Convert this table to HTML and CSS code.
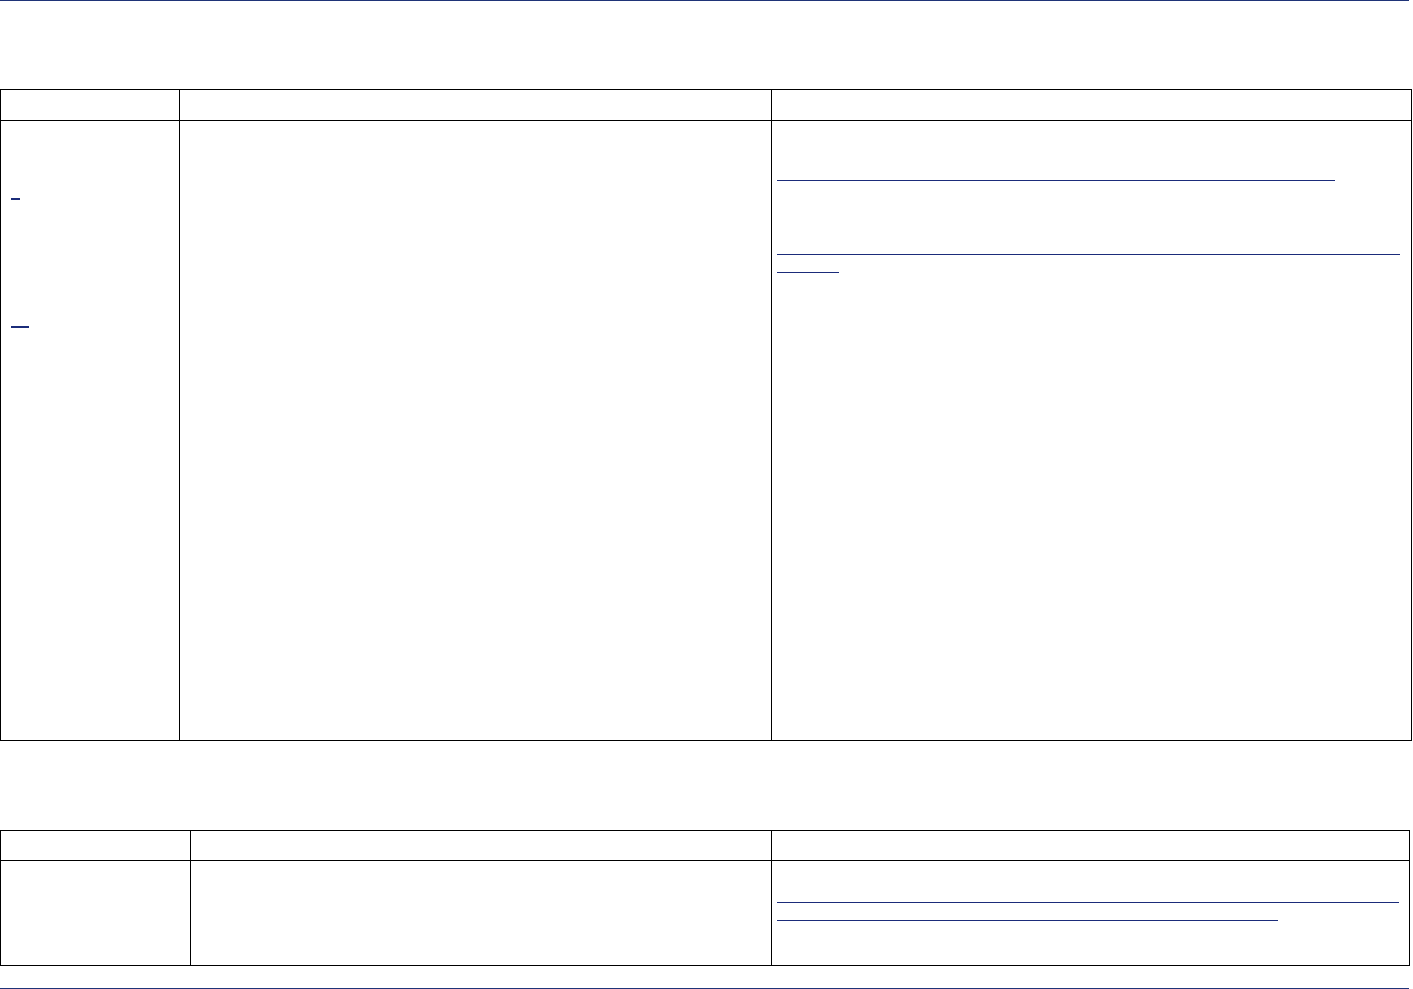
FILE: index.html
```html
<!DOCTYPE html>
<html lang="en">
<head>
<meta charset="utf-8">
<title>Document</title>
<link rel="stylesheet" href="styles.css">
</head>
<body>
<div class="page">
  <div class="rule rule-top"></div>

  <div class="grid grid-one">
    <div class="cell head"></div>
    <div class="cell head"></div>
    <div class="cell head"></div>

    <div class="cell body-one">
      <div class="stack stack-left">
        <a class="ul ul-thick w-9 gap-77" href="#1"></a>
        <a class="ul ul-thick w-18 gap-126" href="#2"></a>
      </div>
    </div>
    <div class="cell body-one"></div>
    <div class="cell body-one">
      <div class="stack stack-right">
        <a class="ul w-558 gap-59" href="#3"></a>
        <a class="ul w-623 gap-73" href="#4"></a>
        <a class="ul w-62 gap-17" href="#4"></a>
      </div>
    </div>
  </div>

  <div class="grid grid-two">
    <div class="cell head-two"></div>
    <div class="cell head-two"></div>
    <div class="cell head-two"></div>

    <div class="cell body-two"></div>
    <div class="cell body-two"></div>
    <div class="cell body-two">
      <div class="stack stack-right">
        <a class="ul w-622 gap-41" href="#5"></a>
        <a class="ul w-501 gap-17" href="#5"></a>
      </div>
    </div>
  </div>

  <div class="rule rule-bottom"></div>
</div>
</body>
</html>
```

FILE: styles.css
```css
* { box-sizing: border-box; }

html, body {
  margin: 0;
  padding: 0;
  background: #ffffff;
  font-family: "Liberation Sans", Arial, sans-serif;
  font-size: 16px;
}

.page {
  width: 1413px;
  height: 989px;
  display: flex;
  flex-direction: column;
  align-items: flex-start;
}

.rule {
  width: 1409px;
  height: 1px;
  background: #1f3478;
  flex: none;
}

.rule-top { margin-bottom: 88px; }
.rule-bottom { margin-top: 22px; }

.grid {
  display: grid;
  border-left: 1px solid #000;
  border-top: 1px solid #000;
  flex: none;
}

.grid-one {
  grid-template-columns: 179px 592px 640px;
  grid-template-rows: 31px 620px;
  margin-bottom: 89px;
}

.grid-two {
  grid-template-columns: 190px 581px 638px;
  grid-template-rows: 30px 105px;
}

.cell {
  border-right: 1px solid #000;
  border-bottom: 1px solid #000;
}

.stack {
  display: flex;
  flex-direction: column;
  align-items: flex-start;
}

.stack-left { padding-left: 10px; }
.stack-right { padding-left: 5px; }

.ul {
  display: block;
  height: 1px;
  background: #1b2c7a;
}

.ul-thick { height: 2px; }

.w-9 { width: 9px; }
.w-18 { width: 18px; }
.w-62 { width: 62px; }
.w-501 { width: 501px; }
.w-558 { width: 558px; }
.w-622 { width: 622px; }
.w-623 { width: 623px; }

.gap-17 { margin-top: 17px; }
.gap-41 { margin-top: 41px; }
.gap-59 { margin-top: 59px; }
.gap-73 { margin-top: 73px; }
.gap-77 { margin-top: 77px; }
.gap-126 { margin-top: 126px; }
```
